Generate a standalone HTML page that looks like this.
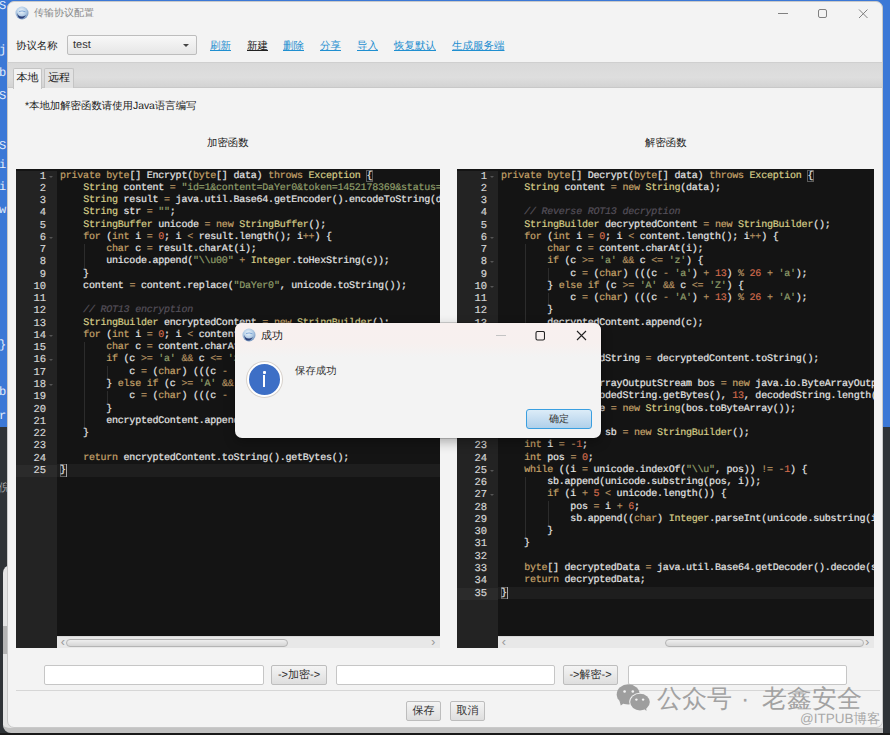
<!DOCTYPE html>
<html><head><meta charset="utf-8">
<style>
*{margin:0;padding:0;box-sizing:border-box}
html,body{width:890px;height:735px;overflow:hidden;background:#3b78d6;font-family:"Liberation Sans",sans-serif;position:relative;text-rendering:geometricPrecision}
.abs{position:absolute}
#bgdark{position:absolute;left:0;top:427px;width:890px;height:309px;background:#2f3337}
#bgbottom{position:absolute;left:0;top:733px;width:890px;height:2px;background:#1a1a1a}
#win2{position:absolute;left:3px;top:565px;width:880px;height:168px;background:#e4e4e4;border-radius:8px 0 0 8px;border-bottom:5px solid #c2c2c2}
#win{position:absolute;left:7px;top:1px;width:876px;height:727px;background:#f3f3f3;border-radius:7px;overflow:hidden;border:1px solid #c9c9c9}
.title{position:absolute;left:26px;top:4px;font-size:10px;color:#8a8a8a;line-height:14px}
.ticon{position:absolute;left:7px;top:5px;width:14px;height:14px;border-radius:50%;background:radial-gradient(circle at 40% 35%,#f4f8fc 0,#a8c4e0 45%,#3c68a8 100%)}
.wbtn{position:absolute;top:8px;color:#777}
.lbl{position:absolute;font-size:10.4px;color:#222;line-height:14px}
.combo{position:absolute;left:59px;top:33px;width:130px;height:20px;border:1px solid #bdbdbd;border-radius:2px;background:linear-gradient(#f8f8f8,#e6e6e6)}
.combo span{position:absolute;left:5px;top:3px;font-size:11px;color:#333}
.combo b{position:absolute;right:7px;top:8px;width:0;height:0;border-left:3.5px solid transparent;border-right:3.5px solid transparent;border-top:3.5px solid #444}
.lnk{position:absolute;top:36px;font-size:10.5px;color:#1f8fd0;text-decoration:underline;line-height:14px}
#tabbar{position:absolute;left:0;top:60px;width:876px;height:26px;background:linear-gradient(#d9d9d9,#dedede 60%,#d3d3d3);border-top:1px solid #cfcfcf;border-bottom:1px solid #c8c8c8}
.tab{position:absolute;top:5px;height:20px;border:1px solid #c4c4c4;border-bottom:none;font-size:11px;line-height:19px;color:#222;text-align:center;border-radius:2px 2px 0 0}
.tab1{left:5px;width:29px;background:#f3f3f3;height:21px}
.tab2{left:36px;width:30px;background:#e2e2e2}
.ed{position:absolute;top:167px;height:479px;background:#141414;overflow:hidden;font-family:"Liberation Mono",monospace}
.edl{left:8px;width:424px}
.edr{left:449px;width:417px}
.gut{position:absolute;left:0;top:1.5px;width:41px;height:479px;background:#232323;color:#d4d4d4;font-size:10.5px;line-height:12.27px;-webkit-text-stroke:0.2px}
.gl{height:12.27px;text-align:right;padding-right:11px;position:relative}
.gl.act{background:rgba(255,255,255,0.04)}
.fw{position:absolute;right:4px;top:5px;width:0;height:0;border-left:2.5px solid transparent;border-right:2.5px solid transparent;border-top:2px solid #555}
.code{position:absolute;left:41px;top:0;right:0;height:467px;overflow:hidden}
.lines{position:absolute;left:3px;top:1.5px;font-size:10px;-webkit-text-stroke:0.2px;line-height:12.27px;color:#e4e4e4;letter-spacing:-0.22px}
.ln{height:12.27px;white-space:pre}
.actline{position:absolute;left:0;right:0;height:12.25px;background:rgba(255,255,255,0.045)}
.guides i{position:absolute;width:1px;height:12.27px;margin-left:4px;background:#2c2c2c}
.kw{color:#c4a26a}.sf{color:#d6cd88}.op{color:#b39060}.nu{color:#cf6a4c}.st{color:#8f9d6a}.cm{color:#55505a;font-style:italic}
.hsb{position:absolute;left:41px;right:0;top:467px;height:12px;background:#e8e8e8;border-top:1px solid #d8d8d8}
.hsb .thumb{position:absolute;top:2px;height:8px;border:1px solid #b4b4b4;border-radius:4px;background:linear-gradient(#eeeeee,#d6d6d6)}
.edl .hsb .thumb{left:9px;width:222px}
.edr .hsb .thumb{left:167px;width:199px}
.hsb .al,.hsb .ar{position:absolute;top:-2px;font-size:13px;color:#999}
.hsb .al{left:2px}.hsb .ar{right:3px}
.inp{position:absolute;top:663px;height:20px;background:#fff;border:1px solid #c6c6c6;border-radius:2px}
.btn{position:absolute;height:20px;border:1px solid #bdbdbd;border-radius:2px;background:linear-gradient(#f4f4f4,#dedede);font-size:11px;color:#333;text-align:center;line-height:18px}
#sep{position:absolute;left:8px;top:688px;width:864px;height:1px;background:#d6d6d6}
#dlg{position:absolute;left:235px;top:323px;width:366px;height:115px;background:#f3f3f3;border-radius:7px;box-shadow:0 0 0 1px rgba(0,0,0,0.15),0 4px 12px rgba(0,0,0,0.3);overflow:hidden}
#dlg .dt{position:absolute;left:0;top:0;width:366px;height:34px;background:linear-gradient(#f8f0ef 0,#f7f0ef 60%,#f3f3f3 100%)}
.wm{position:absolute;top:685px;font-size:25px;color:#a2a2a2;line-height:28px;white-space:pre}
#wm2{position:absolute;left:800px;top:711px;font-size:13.5px;color:#a9a9a9;line-height:16px}

#dlg .dicon{position:absolute;left:7px;top:5px;width:14px;height:14px;border-radius:50%;background:radial-gradient(circle at 40% 35%,#f4f8fc 0,#a8c4e0 45%,#3c68a8 100%)}
#dlg .dtitle{position:absolute;left:26px;top:5px;font-size:11px;color:#222;line-height:14px}
#dlg .info{position:absolute;left:12px;top:39px;width:35px;height:35px;border-radius:50%;background:#3d6fc6;border:2.5px solid #fff;box-shadow:0 0 0 1px #d8d2cc}
#dlg .idot{position:absolute;left:14px;top:7px;width:2.5px;height:2.5px;background:#fff;border-radius:1px}
#dlg .istem{position:absolute;left:14px;top:11px;width:2px;height:12px;background:#fff}
#dlg .dmsg{position:absolute;left:60px;top:41px;font-size:10.4px;color:#333;line-height:14px}
#dlg .okbtn{position:absolute;left:291px;top:86px;width:66px;height:20px;border:1.5px solid #3a9fe0;border-radius:3px;background:linear-gradient(#dcecf8,#b0d0ea);font-size:10px;color:#333;text-align:center;line-height:19px}
#strip span{position:absolute;left:-1px;font-family:"Liberation Mono",monospace;font-size:12px;line-height:12px;color:#e6eefa;margin-top:-2px}
.brk{position:absolute;width:6.75px;height:12.27px;border:1px solid rgba(255,255,255,0.3)}
.cur{position:absolute;width:1px;height:12.27px;background:#a7a7a7}
.lbl,.lnk,#dlg .dmsg,.title,#dlg .dtitle{margin-top:1px}
</style></head><body>
<div id="bgdark"></div>
<div id="strip"><span style="top:1.5px">S</span><span style="top:45.7px">j</span><span style="top:69.0px">b</span><span style="top:92.0px">S</span><span style="top:142.0px">S</span><span style="top:160.5px">i</span><span style="top:183.0px">i</span><span style="top:206.3px">w</span><span style="top:341.0px">}</span><span style="top:387.6px">b</span><span style="top:412.4px">r</span><span style="top:484px;color:#aaa;font-family:'Liberation Sans',sans-serif;font-size:11px">倪</span></div>
<div id="bgbottom"></div>
<div id="win2"></div>
<div class="abs" style="left:3px;top:626px;width:4px;height:28px;background:#b4b4b4"></div>
<div id="win">
  <svg class="abs" style="left:7px;top:4px" width="14" height="14" viewBox="0 0 14 14"><defs><radialGradient id="ga" cx="0.45" cy="0.35" r="0.6"><stop offset="0" stop-color="#eef5fb"/><stop offset="0.6" stop-color="#b4cde6"/><stop offset="1" stop-color="#7d9cc4"/></radialGradient></defs><circle cx="7" cy="7" r="6.5" fill="url(#ga)"/><path d="M2.2 6.5 Q3 11 7.5 10.5 Q9.5 10.2 11 9 Q9 12.8 5.5 12.6 Q2.3 11.8 2.2 6.5Z" fill="#2c3f78"/><path d="M4 5.5 Q7 4.2 10.5 5.8" stroke="#7fa6d6" stroke-width="1" fill="none"/></svg>
  <div class="title">传输协议配置</div>
  <svg class="abs" style="left:769px;top:7px" width="12" height="10"><line x1="1" y1="4.5" x2="11" y2="4.5" stroke="#808080" stroke-width="1"/></svg>
  <svg class="abs" style="left:809px;top:7px" width="10" height="10"><rect x="1.5" y="0.5" width="8" height="8" rx="1.5" fill="none" stroke="#808080" stroke-width="1"/></svg>
  <svg class="abs" style="left:850px;top:7px" width="10" height="10"><path d="M1 0.5 L9.5 9 M9.5 0.5 L1 9" stroke="#808080" stroke-width="1"/></svg>
  <div class="lbl" style="left:8px;top:37px">协议名称</div>
  <div class="combo"><span>test</span><b></b></div>
  <div class="lnk" style="left:202px">刷新</div>
  <div class="lnk" style="left:239px;color:#222">新建</div>
  <div class="lnk" style="left:275px">删除</div>
  <div class="lnk" style="left:312px">分享</div>
  <div class="lnk" style="left:349px">导入</div>
  <div class="lnk" style="left:386px">恢复默认</div>
  <div class="lnk" style="left:444px">生成服务端</div>
  <div id="tabbar">
    <div class="tab tab1">本地</div>
    <div class="tab tab2">远程</div>
  </div>
  <div class="lbl" style="left:17px;top:97px">*本地加解密函数请使用Java语言编写</div>
  <div class="lbl" style="left:199px;top:134px">加密函数</div>
  <div class="lbl" style="left:637px;top:134px">解密函数</div>
<div class="ed edl">
<div class="gut"><div class="gl">1<span class="fw"></span></div>
<div class="gl">2</div>
<div class="gl">3</div>
<div class="gl">4</div>
<div class="gl">5</div>
<div class="gl">6<span class="fw"></span></div>
<div class="gl">7</div>
<div class="gl">8</div>
<div class="gl">9</div>
<div class="gl">10</div>
<div class="gl">11</div>
<div class="gl">12</div>
<div class="gl">13</div>
<div class="gl">14<span class="fw"></span></div>
<div class="gl">15</div>
<div class="gl">16<span class="fw"></span></div>
<div class="gl">17</div>
<div class="gl">18<span class="fw"></span></div>
<div class="gl">19</div>
<div class="gl">20</div>
<div class="gl">21</div>
<div class="gl">22</div>
<div class="gl">23</div>
<div class="gl">24</div>
<div class="gl act">25</div></div>
<div class="code"><div class="actline" style="top:295.48px"></div><div class="guides"><i style="top:74.62px;left:23.12px"></i><i style="top:86.89px;left:23.12px"></i><i style="top:172.78px;left:23.12px"></i><i style="top:185.05px;left:23.12px"></i><i style="top:197.32px;left:23.12px"></i><i style="top:197.32px;left:46.24px"></i><i style="top:209.59px;left:23.12px"></i><i style="top:221.86px;left:23.12px"></i><i style="top:221.86px;left:46.24px"></i><i style="top:234.13px;left:23.12px"></i><i style="top:246.40px;left:23.12px"></i></div><div class="brk" style="top:1.00px;left:309.34px"></div><div class="brk" style="top:295.48px;left:3.00px"></div><div class="cur" style="top:295.48px;left:8.78px"></div><div class="lines"><div class="ln"><span class="kw">private</span> <span class="kw">byte</span>[] Encrypt(<span class="kw">byte</span>[] data) <span class="kw">throws</span> <span class="sf">Exception</span> {</div>
<div class="ln">    <span class="sf">String</span> content <span class="op">=</span> <span class="st">&quot;id=1&amp;content=DaYer0&amp;token=1452178369&amp;status=success&amp;msg=ok&quot;</span>;</div>
<div class="ln">    <span class="sf">String</span> result <span class="op">=</span> java.util.Base64.getEncoder().encodeToString(data);</div>
<div class="ln">    <span class="sf">String</span> str <span class="op">=</span> <span class="st">&quot;&quot;</span>;</div>
<div class="ln">    <span class="sf">StringBuffer</span> unicode <span class="op">=</span> <span class="kw">new</span> <span class="sf">StringBuffer</span>();</div>
<div class="ln">    <span class="kw">for</span> (<span class="kw">int</span> i <span class="op">=</span> <span class="nu">0</span>; i <span class="op">&lt;</span> result.length(); i<span class="op">++</span>) {</div>
<div class="ln">        <span class="kw">char</span> c <span class="op">=</span> result.charAt(i);</div>
<div class="ln">        unicode.append(<span class="st">&quot;\\u00&quot;</span> <span class="op">+</span> <span class="sf">Integer</span>.toHexString(c));</div>
<div class="ln">    }</div>
<div class="ln">    content <span class="op">=</span> content.replace(<span class="st">&quot;DaYer0&quot;</span>, unicode.toString());</div>
<div class="ln">&nbsp;</div>
<div class="ln">    <span class="cm">// ROT13 encryption</span></div>
<div class="ln">    <span class="sf">StringBuilder</span> encryptedContent <span class="op">=</span> <span class="kw">new</span> <span class="sf">StringBuilder</span>();</div>
<div class="ln">    <span class="kw">for</span> (<span class="kw">int</span> i <span class="op">=</span> <span class="nu">0</span>; i <span class="op">&lt;</span> content.length(); i<span class="op">++</span>) {</div>
<div class="ln">        <span class="kw">char</span> c <span class="op">=</span> content.charAt(i);</div>
<div class="ln">        <span class="kw">if</span> (c <span class="op">&gt;=</span> <span class="st">&#x27;a&#x27;</span> <span class="op">&amp;&amp;</span> c <span class="op">&lt;=</span> <span class="st">&#x27;z&#x27;</span>) {</div>
<div class="ln">            c <span class="op">=</span> (<span class="kw">char</span>) (((c <span class="op">-</span> <span class="st">&#x27;a&#x27;</span>) <span class="op">+</span> <span class="nu">13</span>) <span class="op">%</span> <span class="nu">26</span> <span class="op">+</span> <span class="st">&#x27;a&#x27;</span>);</div>
<div class="ln">        } <span class="kw">else</span> <span class="kw">if</span> (c <span class="op">&gt;=</span> <span class="st">&#x27;A&#x27;</span> <span class="op">&amp;&amp;</span> c <span class="op">&lt;=</span> <span class="st">&#x27;Z&#x27;</span>) {</div>
<div class="ln">            c <span class="op">=</span> (<span class="kw">char</span>) (((c <span class="op">-</span> <span class="st">&#x27;A&#x27;</span>) <span class="op">+</span> <span class="nu">13</span>) <span class="op">%</span> <span class="nu">26</span> <span class="op">+</span> <span class="st">&#x27;A&#x27;</span>);</div>
<div class="ln">        }</div>
<div class="ln">        encryptedContent.append(c);</div>
<div class="ln">    }</div>
<div class="ln">&nbsp;</div>
<div class="ln">    <span class="kw">return</span> encryptedContent.toString().getBytes();</div>
<div class="ln">}</div></div></div>
<div class="hsb"><span class="al">&#x2039;</span><span class="thumb"></span><span class="ar">&#x203A;</span></div>
</div>
<div class="ed edr">
<div class="gut"><div class="gl">1<span class="fw"></span></div>
<div class="gl">2</div>
<div class="gl">3</div>
<div class="gl">4</div>
<div class="gl">5</div>
<div class="gl">6<span class="fw"></span></div>
<div class="gl">7</div>
<div class="gl">8<span class="fw"></span></div>
<div class="gl">9</div>
<div class="gl">10<span class="fw"></span></div>
<div class="gl">11</div>
<div class="gl">12</div>
<div class="gl">13</div>
<div class="gl">14</div>
<div class="gl">15</div>
<div class="gl">16</div>
<div class="gl">17</div>
<div class="gl">18</div>
<div class="gl">19</div>
<div class="gl">20</div>
<div class="gl">21</div>
<div class="gl">22</div>
<div class="gl">23</div>
<div class="gl">24</div>
<div class="gl">25<span class="fw"></span></div>
<div class="gl">26</div>
<div class="gl">27<span class="fw"></span></div>
<div class="gl">28</div>
<div class="gl">29</div>
<div class="gl">30</div>
<div class="gl">31</div>
<div class="gl">32</div>
<div class="gl">33</div>
<div class="gl">34</div>
<div class="gl act">35</div></div>
<div class="code"><div class="actline" style="top:418.18px"></div><div class="guides"><i style="top:74.62px;left:23.12px"></i><i style="top:86.89px;left:23.12px"></i><i style="top:99.16px;left:23.12px"></i><i style="top:99.16px;left:46.24px"></i><i style="top:111.43px;left:23.12px"></i><i style="top:123.70px;left:23.12px"></i><i style="top:123.70px;left:46.24px"></i><i style="top:135.97px;left:23.12px"></i><i style="top:148.24px;left:23.12px"></i><i style="top:307.75px;left:23.12px"></i><i style="top:320.02px;left:23.12px"></i><i style="top:332.29px;left:23.12px"></i><i style="top:332.29px;left:46.24px"></i><i style="top:344.56px;left:23.12px"></i><i style="top:344.56px;left:46.24px"></i><i style="top:356.83px;left:23.12px"></i></div><div class="brk" style="top:1.00px;left:309.34px"></div><div class="brk" style="top:418.18px;left:3.00px"></div><div class="cur" style="top:418.18px;left:8.78px"></div><div class="lines"><div class="ln"><span class="kw">private</span> <span class="kw">byte</span>[] Decrypt(<span class="kw">byte</span>[] data) <span class="kw">throws</span> <span class="sf">Exception</span> {</div>
<div class="ln">    <span class="sf">String</span> content <span class="op">=</span> <span class="kw">new</span> <span class="sf">String</span>(data);</div>
<div class="ln">&nbsp;</div>
<div class="ln">    <span class="cm">// Reverse ROT13 decryption</span></div>
<div class="ln">    <span class="sf">StringBuilder</span> decryptedContent <span class="op">=</span> <span class="kw">new</span> <span class="sf">StringBuilder</span>();</div>
<div class="ln">    <span class="kw">for</span> (<span class="kw">int</span> i <span class="op">=</span> <span class="nu">0</span>; i <span class="op">&lt;</span> content.length(); i<span class="op">++</span>) {</div>
<div class="ln">        <span class="kw">char</span> c <span class="op">=</span> content.charAt(i);</div>
<div class="ln">        <span class="kw">if</span> (c <span class="op">&gt;=</span> <span class="st">&#x27;a&#x27;</span> <span class="op">&amp;&amp;</span> c <span class="op">&lt;=</span> <span class="st">&#x27;z&#x27;</span>) {</div>
<div class="ln">            c <span class="op">=</span> (<span class="kw">char</span>) (((c <span class="op">-</span> <span class="st">&#x27;a&#x27;</span>) <span class="op">+</span> <span class="nu">13</span>) <span class="op">%</span> <span class="nu">26</span> <span class="op">+</span> <span class="st">&#x27;a&#x27;</span>);</div>
<div class="ln">        } <span class="kw">else</span> <span class="kw">if</span> (c <span class="op">&gt;=</span> <span class="st">&#x27;A&#x27;</span> <span class="op">&amp;&amp;</span> c <span class="op">&lt;=</span> <span class="st">&#x27;Z&#x27;</span>) {</div>
<div class="ln">            c <span class="op">=</span> (<span class="kw">char</span>) (((c <span class="op">-</span> <span class="st">&#x27;A&#x27;</span>) <span class="op">+</span> <span class="nu">13</span>) <span class="op">%</span> <span class="nu">26</span> <span class="op">+</span> <span class="st">&#x27;A&#x27;</span>);</div>
<div class="ln">        }</div>
<div class="ln">        decryptedContent.append(c);</div>
<div class="ln">    }</div>
<div class="ln">&nbsp;</div>
<div class="ln">    <span class="sf">String</span> decodedString <span class="op">=</span> decryptedContent.toString();</div>
<div class="ln">&nbsp;</div>
<div class="ln">    java.io.ByteArrayOutputStream bos <span class="op">=</span> <span class="kw">new</span> java.io.ByteArrayOutputStream();</div>
<div class="ln">    bos.write(decodedString.getBytes(), <span class="nu">13</span>, decodedString.length() <span class="op">-</span> <span class="nu">13</span>);</div>
<div class="ln">    <span class="sf">String</span> unicode <span class="op">=</span> <span class="kw">new</span> <span class="sf">String</span>(bos.toByteArray());</div>
<div class="ln">&nbsp;</div>
<div class="ln">    <span class="sf">StringBuilder</span> sb <span class="op">=</span> <span class="kw">new</span> <span class="sf">StringBuilder</span>();</div>
<div class="ln">    <span class="kw">int</span> i <span class="op">=</span> <span class="op">-</span><span class="nu">1</span>;</div>
<div class="ln">    <span class="kw">int</span> pos <span class="op">=</span> <span class="nu">0</span>;</div>
<div class="ln">    <span class="kw">while</span> ((i <span class="op">=</span> unicode.indexOf(<span class="st">&quot;\\u&quot;</span>, pos)) <span class="op">!=</span> <span class="op">-</span><span class="nu">1</span>) {</div>
<div class="ln">        sb.append(unicode.substring(pos, i));</div>
<div class="ln">        <span class="kw">if</span> (i <span class="op">+</span> <span class="nu">5</span> <span class="op">&lt;</span> unicode.length()) {</div>
<div class="ln">            pos <span class="op">=</span> i <span class="op">+</span> <span class="nu">6</span>;</div>
<div class="ln">            sb.append((<span class="kw">char</span>) <span class="sf">Integer</span>.parseInt(unicode.substring(i <span class="op">+</span> <span class="nu">2</span>, i <span class="op">+</span> <span class="nu">6</span>), <span class="nu">16</span>));</div>
<div class="ln">        }</div>
<div class="ln">    }</div>
<div class="ln">&nbsp;</div>
<div class="ln">    <span class="kw">byte</span>[] decryptedData <span class="op">=</span> java.util.Base64.getDecoder().decode(sb.toString());</div>
<div class="ln">    <span class="kw">return</span> decryptedData;</div>
<div class="ln">}</div></div></div>
<div class="hsb"><span class="al">&#x2039;</span><span class="thumb"></span><span class="ar">&#x203A;</span></div>
</div>
  <div class="inp" style="left:36px;width:220px"></div>
  <div class="btn" style="left:263px;top:663px;width:56px">-&gt;加密-&gt;</div>
  <div class="inp" style="left:328px;width:219px"></div>
  <div class="btn" style="left:555px;top:663px;width:55px">-&gt;解密-&gt;</div>
  <div class="inp" style="left:620px;width:219px"></div>
  <div id="sep"></div>
  <div class="btn" style="left:398px;top:699px;width:35px">保存</div>
  <div class="btn" style="left:442px;top:699px;width:35px">取消</div>
</div>
<div id="dlg">
  <div class="dt"></div>
  <svg class="abs" style="left:7px;top:5px" width="14" height="14" viewBox="0 0 14 14"><defs><radialGradient id="gb" cx="0.45" cy="0.35" r="0.6"><stop offset="0" stop-color="#eef5fb"/><stop offset="0.6" stop-color="#b4cde6"/><stop offset="1" stop-color="#7d9cc4"/></radialGradient></defs><circle cx="7" cy="7" r="6.5" fill="url(#gb)"/><path d="M2.2 6.5 Q3 11 7.5 10.5 Q9.5 10.2 11 9 Q9 12.8 5.5 12.6 Q2.3 11.8 2.2 6.5Z" fill="#2c3f78"/><path d="M4 5.5 Q7 4.2 10.5 5.8" stroke="#7fa6d6" stroke-width="1" fill="none"/></svg>
  <div class="dtitle">成功</div>
  <svg class="abs" style="left:260px;top:8px" width="12" height="10"><line x1="1" y1="4.5" x2="11" y2="4.5" stroke="#c4c4c4" stroke-width="1"/></svg>
  <svg class="abs" style="left:300px;top:8px" width="10" height="10"><rect x="1" y="0.5" width="8.5" height="8.5" rx="1.5" fill="none" stroke="#222" stroke-width="1.1"/></svg>
  <svg class="abs" style="left:341px;top:7px" width="11" height="11"><path d="M1 1 L10 10 M10 1 L1 10" stroke="#222" stroke-width="1.1"/></svg>
  <div class="info"><div class="idot"></div><div class="istem"></div></div>
  <div class="dmsg">保存成功</div>
  <div class="okbtn">确定</div>
</div>
<svg class="abs" style="left:610px;top:678px" width="45" height="38" viewBox="610 678 45 38">
<ellipse cx="628.2" cy="694.3" rx="11.5" ry="10.1" fill="#9e9e9e"/>
<path d="M619.5 701 L620.8 705.5 L625 702.5 Z" fill="#9e9e9e"/>
<ellipse cx="640" cy="702.1" rx="10.8" ry="9.4" fill="#f3f3f3"/>
<ellipse cx="640" cy="702.1" rx="9.8" ry="8.4" fill="#9e9e9e"/>
<path d="M643 708 L646.5 711 L646 706 Z" fill="#9e9e9e"/>
<circle cx="624.6" cy="691.5" r="1.3" fill="#f3f3f3"/><circle cx="632.8" cy="691.5" r="1.3" fill="#f3f3f3"/>
<circle cx="636.4" cy="699.6" r="1.2" fill="#f3f3f3"/><circle cx="643.1" cy="699.6" r="1.2" fill="#f3f3f3"/>
</svg>
<div class="wm" style="left:657px">公众号</div><div class="wm" style="left:741px">·</div><div class="wm" style="left:762px">老鑫安全</div>
<div id="wm2">@ITPUB博客</div>
</body></html>
